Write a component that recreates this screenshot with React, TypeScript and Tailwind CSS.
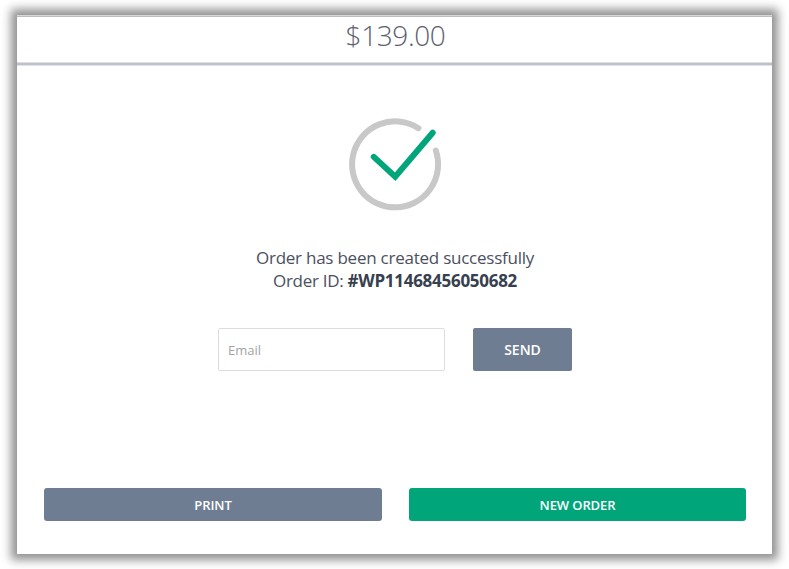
export default function App() {
  return (
    <div className="h-[569px] w-[789px] overflow-hidden bg-white pt-[15px] pl-[17px] font-['Open_Sans','Noto_Sans',sans-serif] text-[#4b5060]">
      <main className="flex h-[539px] w-[755px] flex-col bg-white shadow-[0_0_9px_6px_rgba(0,0,0,0.43)]">
        <div className="h-0.5 shrink-0 border-t border-[#d8d8d8] bg-[#bdbdbd]" />
        <header className="flex h-[45px] shrink-0 justify-center pl-0.5 text-[28px] leading-[36px] font-light tracking-[-0.4px] text-[#5d6070]">
          $139.00
        </header>
        <div className="h-1 shrink-0 border-t border-b border-t-[#dedfe1] border-b-[#dde3ea] bg-[#bfc2c9]" />
        <section className="flex flex-col items-center pt-[48px] pl-px">
          <svg className="h-[100px] w-[100px]" viewBox="0 0 100 100" fill="none" strokeLinecap="round">
            <path d="M73.4 14.2A43 43 0 1 0 90.8 36.5" stroke="#c8c8c8" strokeWidth="6" />
            <path d="M28.8 42.9 50.2 62.7 87.7 18.7" stroke="#00a57a" strokeWidth="6" />
          </svg>
          <div className="mt-[32px] text-center text-[17px] leading-[23px] tracking-[-0.24px]">
            <p>Order has been created successfully</p>
            <p className="tracking-[-0.28px]">
              Order ID: <strong className="font-bold text-[#36404e]">#WP11468456050682</strong>
            </p>
          </div>
          <form className="mt-[36px] flex gap-[28px]" onSubmit={(e) => e.preventDefault()}>
            <input
              className="h-[43px] w-[227px] rounded-xs border border-[#dddddd] px-[9px] text-[13px] outline-none placeholder:text-[#a3a3a3]"
              placeholder="Email"
            />
            <button className="h-[43px] w-[99px] rounded-xs bg-[#6e7d91] text-[14px] font-semibold text-white">
              SEND
            </button>
          </form>
        </section>
        <footer className="mt-auto mb-[33px] ml-[27px] flex gap-[27px] text-[13px] font-semibold tracking-[-0.1px] text-white">
          <button className="h-[33px] w-[338px] rounded-[3px] bg-[#6e7d91] pt-0.5">PRINT</button>
          <button className="h-[33px] w-[337px] rounded-[3px] bg-[#00a57a] pt-0.5">NEW ORDER</button>
        </footer>
      </main>
    </div>
  );
}
